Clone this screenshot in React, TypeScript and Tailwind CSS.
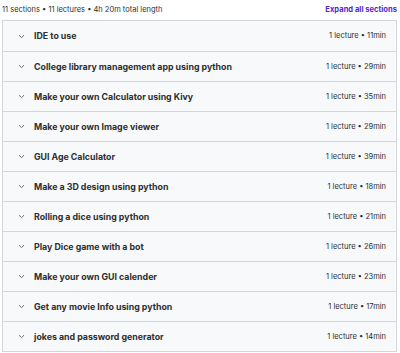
import React from 'react';

interface Section {
    title: string;
    length: string;
}

const sections: Section[] = [
    { title: 'IDE to use', length: '11min' },
    { title: 'College library management app using python', length: '29min' },
    { title: 'Make your own Calculator using Kivy', length: '35min' },
    { title: 'Make your own Image viewer', length: '29min' },
    { title: 'GUI Age Calculator', length: '39min' },
    { title: 'Make a 3D design using python', length: '18min' },
    { title: 'Rolling a dice using python', length: '21min' },
    { title: 'Play Dice game with a bot', length: '26min' },
    { title: 'Make your own GUI calender', length: '23min' },
    { title: 'Get any movie Info using python', length: '17min' },
    { title: 'jokes and password generator', length: '14min' },
];

const Chevron = () => (
    <svg width="7" height="5" viewBox="0 0 7 5" fill="none" className="shrink-0">
        <path d="M1 1.2 L3.5 3.6 L6 1.2" stroke="#6a6f73" strokeWidth="1" />
    </svg>
);

const App: React.FC = () => {
    return (
        <div className="w-[400px] h-[353px] bg-white font-['Inter',sans-serif] text-[#2d2f31] overflow-hidden">
            <div className="flex items-center justify-between h-[20px] pl-[2px] pr-[3px]">
                <span className="text-[7.5px] text-[#2d2f31]">11 sections • 11 lectures • 4h 20m total length</span>
                <span className="text-[7.6px] font-bold text-[#5624d0]">Expand all sections</span>
            </div>
            <div className="mx-[2px] w-[395px] border border-[#d1d7dc]">
                {sections.map((s, i) => (
                    <div
                        key={s.title}
                        className={`flex items-center justify-between h-[30px] bg-[#f7f9fa] pl-[15px] pr-[10px] ${i > 0 ? 'border-t border-[#d1d7dc]' : ''}`}
                    >
                        <div className="flex items-center gap-[9px]">
                            <Chevron />
                            <span className="text-[8.8px] font-bold">{s.title}</span>
                        </div>
                        <span className="text-[7.5px]">1 lecture • {s.length}</span>
                    </div>
                ))}
            </div>
        </div>
    );
};

export default App;
